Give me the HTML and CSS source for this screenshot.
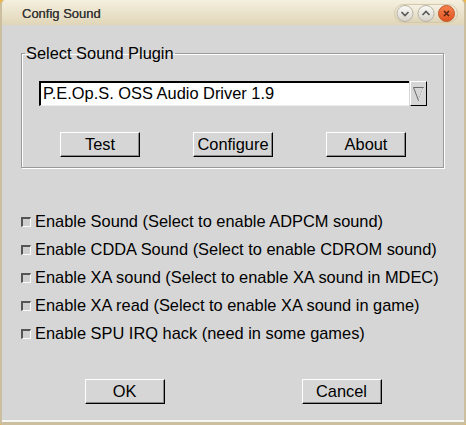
FILE: index.html
```html
<!DOCTYPE html>
<html lang="en">
<head>
    <meta charset="UTF-8">
    <meta name="viewport" content="width=device-width, initial-scale=1.0">
    <title>Config Sound</title>
    <link rel="stylesheet" href="styles.css">
</head>
<body>
    <div class="window">
        <!-- Title bar -->
        <div class="titlebar">
            <span class="title">Config Sound</span>
            <svg class="controls" width="66" height="22" viewBox="0 0 66 22">
                <defs>
                    <linearGradient id="pill" x1="0" y1="0" x2="0" y2="1">
                        <stop offset="0" stop-color="#f6f2e6"/>
                        <stop offset="1" stop-color="#ddd3b6"/>
                    </linearGradient>
                    <linearGradient id="btn" x1="0" y1="0" x2="0" y2="1">
                        <stop offset="0" stop-color="#fbfbf8"/>
                        <stop offset="1" stop-color="#d6d2c8"/>
                    </linearGradient>
                    <linearGradient id="close" x1="0" y1="0" x2="0" y2="1">
                        <stop offset="0" stop-color="#f4834f"/>
                        <stop offset="1" stop-color="#e0521f"/>
                    </linearGradient>
                </defs>
                <rect x="1.5" y="2.5" width="63" height="18" rx="9" fill="url(#pill)" stroke="#d4c9aa"/>
                <circle cx="12" cy="11.5" r="8" fill="url(#btn)" stroke="#b8b2a4"/>
                <circle cx="33" cy="11.5" r="8" fill="url(#btn)" stroke="#b8b2a4"/>
                <circle cx="53.5" cy="11.5" r="8" fill="url(#close)" stroke="#c4582c"/>
                <path d="M8.5 10 L12 13.5 L15.5 10" fill="none" stroke="#5a5a5a" stroke-width="1.7"/>
                <path d="M29.5 13 L33 9.5 L36.5 13" fill="none" stroke="#5a5a5a" stroke-width="1.7"/>
                <path d="M51 9 L56 14 M56 9 L51 14" fill="none" stroke="#5b2614" stroke-width="1.6"/>
            </svg>
        </div>

        <div class="client">
            <!-- Plugin frame -->
            <fieldset class="plugin">
                <legend>Select Sound Plugin</legend>
                <div class="combo">
                    <div class="entry">P.E.Op.S. OSS Audio Driver 1.9</div>
                    <div class="arrow">
                        <svg width="15" height="23" viewBox="0 0 15 23">
                            <path d="M2.5 5.5 L12.5 5.5 L7.5 18.5 Z" fill="none" stroke="#6a6a6a"/>
                            <path d="M12.5 6 L8 18" fill="none" stroke="#f4f4f4"/>
                        </svg>
                    </div>
                </div>
                <div class="actions">
                    <button class="btn">Test</button>
                    <button class="btn">Configure</button>
                    <button class="btn">About</button>
                </div>
            </fieldset>

            <!-- Options -->
            <div class="options">
                <label class="check"><span class="box"></span>Enable Sound (Select to enable ADPCM sound)</label>
                <label class="check"><span class="box"></span>Enable CDDA Sound (Select to enable CDROM sound)</label>
                <label class="check"><span class="box"></span>Enable XA sound (Select to enable XA sound in MDEC)</label>
                <label class="check"><span class="box"></span>Enable XA read (Select to enable XA sound in game)</label>
                <label class="check"><span class="box"></span>Enable SPU IRQ hack (need in some games)</label>
            </div>

            <!-- OK / Cancel -->
            <div class="footer">
                <button class="btn">OK</button>
                <button class="btn">Cancel</button>
            </div>
        </div>
    </div>
</body>
</html>
```

FILE: styles.css
```css
*{
    margin: 0;
    padding: 0;
    box-sizing: border-box;
}

html{
    background: #f0b640;
}

body{
    font-family: "Liberation Sans", Arial, sans-serif;
    font-size: 16.4px;
    color: #000;
}

.window{
    width: 466px;
    height: 425px;
    display: flex;
    flex-direction: column;
    background: #d6d6d6;
    border-left: 2px solid #cbbf9f;
    border-right: 2px solid #cbbf9f;
    border-bottom: 3px solid #cbbf9f;
    border-radius: 5px 5px 2px 2px;
    overflow: hidden;
}

/* title bar */
.titlebar{
    height: 25px;
    flex: none;
    display: flex;
    align-items: center;
    padding-left: 20px;
    padding-right: 5px;
    background: linear-gradient(#f4efdf, #e0d6b8);
}

.titlebar .title{
    font-size: 13px;
    color: #363636;
    text-shadow: 0 0 0.4px #363636;
    margin-top: 1px;
}

.titlebar .controls{
    margin-left: auto;
    margin-top: 1px;
}

.client{
    flex: 1;
    display: flex;
    flex-direction: column;
    padding-top: 19px;
    border-bottom: 2px solid #f6f6f2;
}

/* plugin frame */
.plugin{
    margin: 0 20px 0 19px;
    border: 1px solid #9a9a9a;
    box-shadow: inset 1px 1px #fff, 1px 1px #fff;
    padding: 19px 16px 10px 17px;
}

.plugin legend{
    margin-left: -14px;
    padding: 0 1px;
    line-height: 18px;
}

.combo{
    display: flex;
    height: 25px;
}

.entry{
    flex: 1;
    background: #fff;
    border-top: 2px solid #000;
    border-left: 2px solid #000;
    border-bottom: 1px solid #ececec;
    padding-left: 2px;
    line-height: 21px;
    white-space: nowrap;
}

.arrow{
    width: 17px;
    margin-left: 1px;
    background: #d6d6d6;
    border-top: 1px solid #fff;
    border-left: 1px solid #fff;
    border-right: 1px solid #000;
    border-bottom: 1px solid #000;
}

.arrow svg{
    display: block;
}

.actions{
    display: flex;
    justify-content: center;
    gap: 53px;
    margin-top: 26px;
}

/* bevel buttons */
.btn{
    width: 80px;
    height: 25px;
    font-family: inherit;
    font-size: 16.4px;
    color: #000;
    background: #d6d6d6;
    border-top: 1px solid #fff;
    border-left: 1px solid #fff;
    border-right: 1px solid #000;
    border-bottom: 1px solid #000;
    box-shadow: inset -1px -1px #8a8a8a;
    line-height: 21px;
    cursor: pointer;
}

/* check options */
.options{
    display: flex;
    flex-direction: column;
    margin-top: 39px;
    padding-left: 19px;
}

.check{
    display: flex;
    align-items: center;
    gap: 4px;
    height: 28px;
    line-height: 28px;
    white-space: nowrap;
}

.check .box{
    width: 10px;
    height: 10px;
    margin-top: 2px;
    background: #cfcfcf;
    border-top: 2px solid #555;
    border-left: 2px solid #555;
    border-right: 1px solid #fafafa;
    border-bottom: 1px solid #fafafa;
}

.footer{
    display: flex;
    justify-content: center;
    gap: 137px;
    margin-top: 32px;
}
```
